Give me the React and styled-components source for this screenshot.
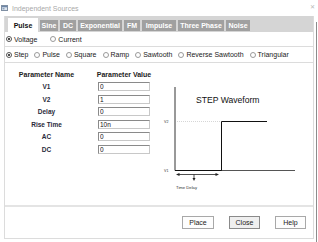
import React from "react";
import styled, { createGlobalStyle } from "styled-components";

const Global = createGlobalStyle`
  html, body { margin: 0; padding: 0; background: #fff; }
  body { font-family: "Liberation Sans", Arial, sans-serif; }
  * { box-sizing: border-box; }
`;

const Screen = styled.div`
  width: 318px;
  height: 242px;
  display: flex;
  flex-direction: column;
  background: #fff;
  overflow: hidden;
`;

const TitleBar = styled.div`
  height: 16px;
  display: flex;
  align-items: center;
  padding-left: 1px;
  padding-right: 3px;
  gap: 4px;
  font-size: 7px;
  color: #a8a8a8;
`;

const TitleText = styled.span`
  flex: 1;
`;

const CloseGlyph = styled.span`
  font-size: 6px;
  color: #b8b8b8;
  margin-top: -4px;
`;

const Body = styled.div`
  flex: 1;
  display: flex;
`;

const Dialog = styled.div`
  margin-left: 4px;
  width: 310px;
  height: 223px;
  display: flex;
  flex-direction: column;
  border-left: 1px solid #dcdcdc;
  border-right: 1px solid #dcdcdc;
  border-bottom: 1px solid #dcdcdc;
`;

const Edge = styled.div`
  width: 1px;
  margin-left: 2px;
  margin-top: 6px;
  background: #8c8c8c;
`;

const TabBar = styled.div`
  height: 16px;
  background: #d5d5d5;
  display: flex;
  align-items: flex-end;
  padding-left: 3px;
  gap: 2px;
`;

const Tab = styled.div`
  width: ${(p) => p.$w}px;
  height: ${(p) => (p.$active ? 14 : 11)}px;
  margin-bottom: ${(p) => (p.$active ? 0 : 1)}px;
  background: ${(p) => (p.$active ? "#fff" : "#a0a0a0")};
  color: ${(p) => (p.$active ? "#111" : "#fff")};
  font-size: 7px;
  font-weight: bold;
  display: flex;
  align-items: center;
  justify-content: center;
  white-space: nowrap;
`;

const RadioRow = styled.div`
  height: ${(p) => p.$h}px;
  display: flex;
  align-items: center;
  padding-left: 1px;
  gap: ${(p) => p.$gap}px;
  border-bottom: 1px solid #dcdcdc;
`;

const RadioItem = styled.label`
  display: flex;
  align-items: center;
  gap: 2px;
  font-size: 7px;
  color: #1a1a1a;
  white-space: nowrap;
`;

const RadioDot = styled.span`
  width: 6px;
  height: 6px;
  border-radius: 50%;
  border: 1px solid ${(p) => (p.$on ? "#555" : "#9a9a9a")};
  background: #fff;
  display: flex;
  align-items: center;
  justify-content: center;
  &::after {
    content: "";
    width: 2px;
    height: 2px;
    border-radius: 50%;
    background: ${(p) => (p.$on ? "#111" : "transparent")};
  }
`;

const Content = styled.div`
  height: 142px;
  display: flex;
`;

const ParamGrid = styled.div`
  width: 155px;
  display: grid;
  grid-template-columns: 83px 72px;
  grid-auto-rows: 12.5px;
  align-content: start;
  padding-top: 5px;
`;

const HeadCell = styled.div`
  font-size: 7px;
  font-weight: bold;
  color: #222;
  display: flex;
  align-items: center;
  justify-content: center;
  height: 12px;
  margin-bottom: 3px;
`;

const LabelCell = styled.div`
  font-size: 6.5px;
  font-weight: bold;
  color: #2a2a3a;
  display: flex;
  align-items: center;
  justify-content: center;
`;

const InputCell = styled.div`
  display: flex;
  align-items: center;
  justify-content: center;
`;

const ValueBox = styled.input`
  width: 52px;
  height: 9px;
  border: 1px solid #8a8a8a;
  border-right-color: #c8c8c8;
  border-bottom-color: #c8c8c8;
  padding: 0 1px;
  font-family: "Liberation Sans", Arial, sans-serif;
  font-size: 6.5px;
  color: #111;
  background: #fff;
  outline: none;
`;

const Wave = styled.svg`
  width: 153px;
  height: 142px;
  margin-left: 0;
  display: block;
`;

const Separator = styled.div`
  height: 2px;
  background: #e4e4e4;
`;

const Footer = styled.div`
  flex: 1;
  display: flex;
  justify-content: flex-end;
  align-items: flex-start;
  padding-top: 9px;
  padding-right: 7px;
  gap: 15px;
`;

const Button = styled.button`
  width: ${(p) => p.$w}px;
  height: 13px;
  padding: 0;
  border: 1px solid ${(p) => (p.$focus ? "#8a8a8a" : "#a8a8a8")};
  background: ${(p) => (p.$focus ? "#efefef" : "#fdfdfd")};
  font-family: "Liberation Sans", Arial, sans-serif;
  font-size: 7px;
  color: #222;
`;

const tabs = [
  ["Pulse", 30],
  ["Sine", 18],
  ["DC", 16],
  ["Exponential", 44],
  ["FM", 16],
  ["Impulse", 34],
  ["Three Phase", 46],
  ["Noise", 24],
];

const waves = ["Step", "Pulse", "Square", "Ramp", "Sawtooth", "Reverse Sawtooth", "Triangular"];

const params = [
  ["V1", "0"],
  ["V2", "1"],
  ["Delay", "0"],
  ["Rise Time", "10n"],
  ["AC", "0"],
  ["DC", "0"],
];

function WindowIcon() {
  return (
    <svg width="7" height="6" viewBox="0 0 7 6">
      <rect x="0.5" y="0.5" width="6" height="5" fill="#dfe6ee" stroke="#7f8fa3" />
      <rect x="1" y="1" width="5" height="1.3" fill="#6c86a8" />
      <rect x="1.5" y="3" width="2" height="1.5" fill="#8ea3bd" />
    </svg>
  );
}

function Waveform() {
  return (
    <Wave viewBox="0 0 153 142">
      <text x="36" y="40" fontSize="8.6" fontFamily="Liberation Sans, Arial, sans-serif" fill="#111">
        STEP Waveform
      </text>
      <line x1="15" y1="24" x2="15" y2="107.5" stroke="#333" strokeWidth="1" />
      <line x1="15" y1="107.5" x2="135" y2="107.5" stroke="#555" strokeWidth="1" />
      <line x1="17" y1="58.5" x2="61" y2="58.5" stroke="#c4c4c4" strokeWidth="0.7" strokeDasharray="1 1" />
      <polyline points="15,107.5 61.5,107.5 61.5,58.5 107,58.5" fill="none" stroke="#111" strokeWidth="1" />
      <text x="4" y="60" fontSize="3.6" fontFamily="Liberation Sans, Arial, sans-serif" fill="#333">V2</text>
      <text x="4" y="109" fontSize="3.6" fontFamily="Liberation Sans, Arial, sans-serif" fill="#333">V1</text>
      <line x1="18" y1="111.5" x2="57" y2="111.5" stroke="#222" strokeWidth="0.8" />
      <polygon points="16,111.5 19.5,110 19.5,113" fill="#222" />
      <polygon points="59,111.5 55.5,110 55.5,113" fill="#222" />
      <line x1="34" y1="111.5" x2="34" y2="115" stroke="#222" strokeWidth="0.8" />
      <polygon points="34,118 32.5,115 35.5,115" fill="#222" />
      <text x="16" y="125.5" fontSize="4.2" fontFamily="Liberation Sans, Arial, sans-serif" fill="#333">
        Time Delay
      </text>
    </Wave>
  );
}

export default function App() {
  return (
    <>
      <Global />
      <Screen>
        <TitleBar>
          <WindowIcon />
          <TitleText>Independent Sources</TitleText>
          <CloseGlyph>✕</CloseGlyph>
        </TitleBar>
        <Body>
          <Dialog>
            <TabBar>
              {tabs.map(([t, w], i) => (
                <Tab key={t} $w={w} $active={i === 0}>
                  {t}
                </Tab>
              ))}
            </TabBar>
            <RadioRow $h={15} $gap={13}>
              <RadioItem>
                <RadioDot $on />
                Voltage
              </RadioItem>
              <RadioItem>
                <RadioDot />
                Current
              </RadioItem>
            </RadioRow>
            <RadioRow $h={16} $gap={6}>
              {waves.map((w, i) => (
                <RadioItem key={w}>
                  <RadioDot $on={i === 0} />
                  {w}
                </RadioItem>
              ))}
            </RadioRow>
            <Content>
              <ParamGrid>
                <HeadCell>Parameter Name</HeadCell>
                <HeadCell>Parameter Value</HeadCell>
                {params.map(([n, v]) => (
                  <React.Fragment key={n}>
                    <LabelCell>{n}</LabelCell>
                    <InputCell>
                      <ValueBox defaultValue={v} />
                    </InputCell>
                  </React.Fragment>
                ))}
              </ParamGrid>
              <Waveform />
            </Content>
            <Separator />
            <Footer>
              <Button $w={32}>Place</Button>
              <Button $w={31} $focus>Close</Button>
              <Button $w={31}>Help</Button>
            </Footer>
          </Dialog>
          <Edge />
        </Body>
      </Screen>
    </>
  );
}
